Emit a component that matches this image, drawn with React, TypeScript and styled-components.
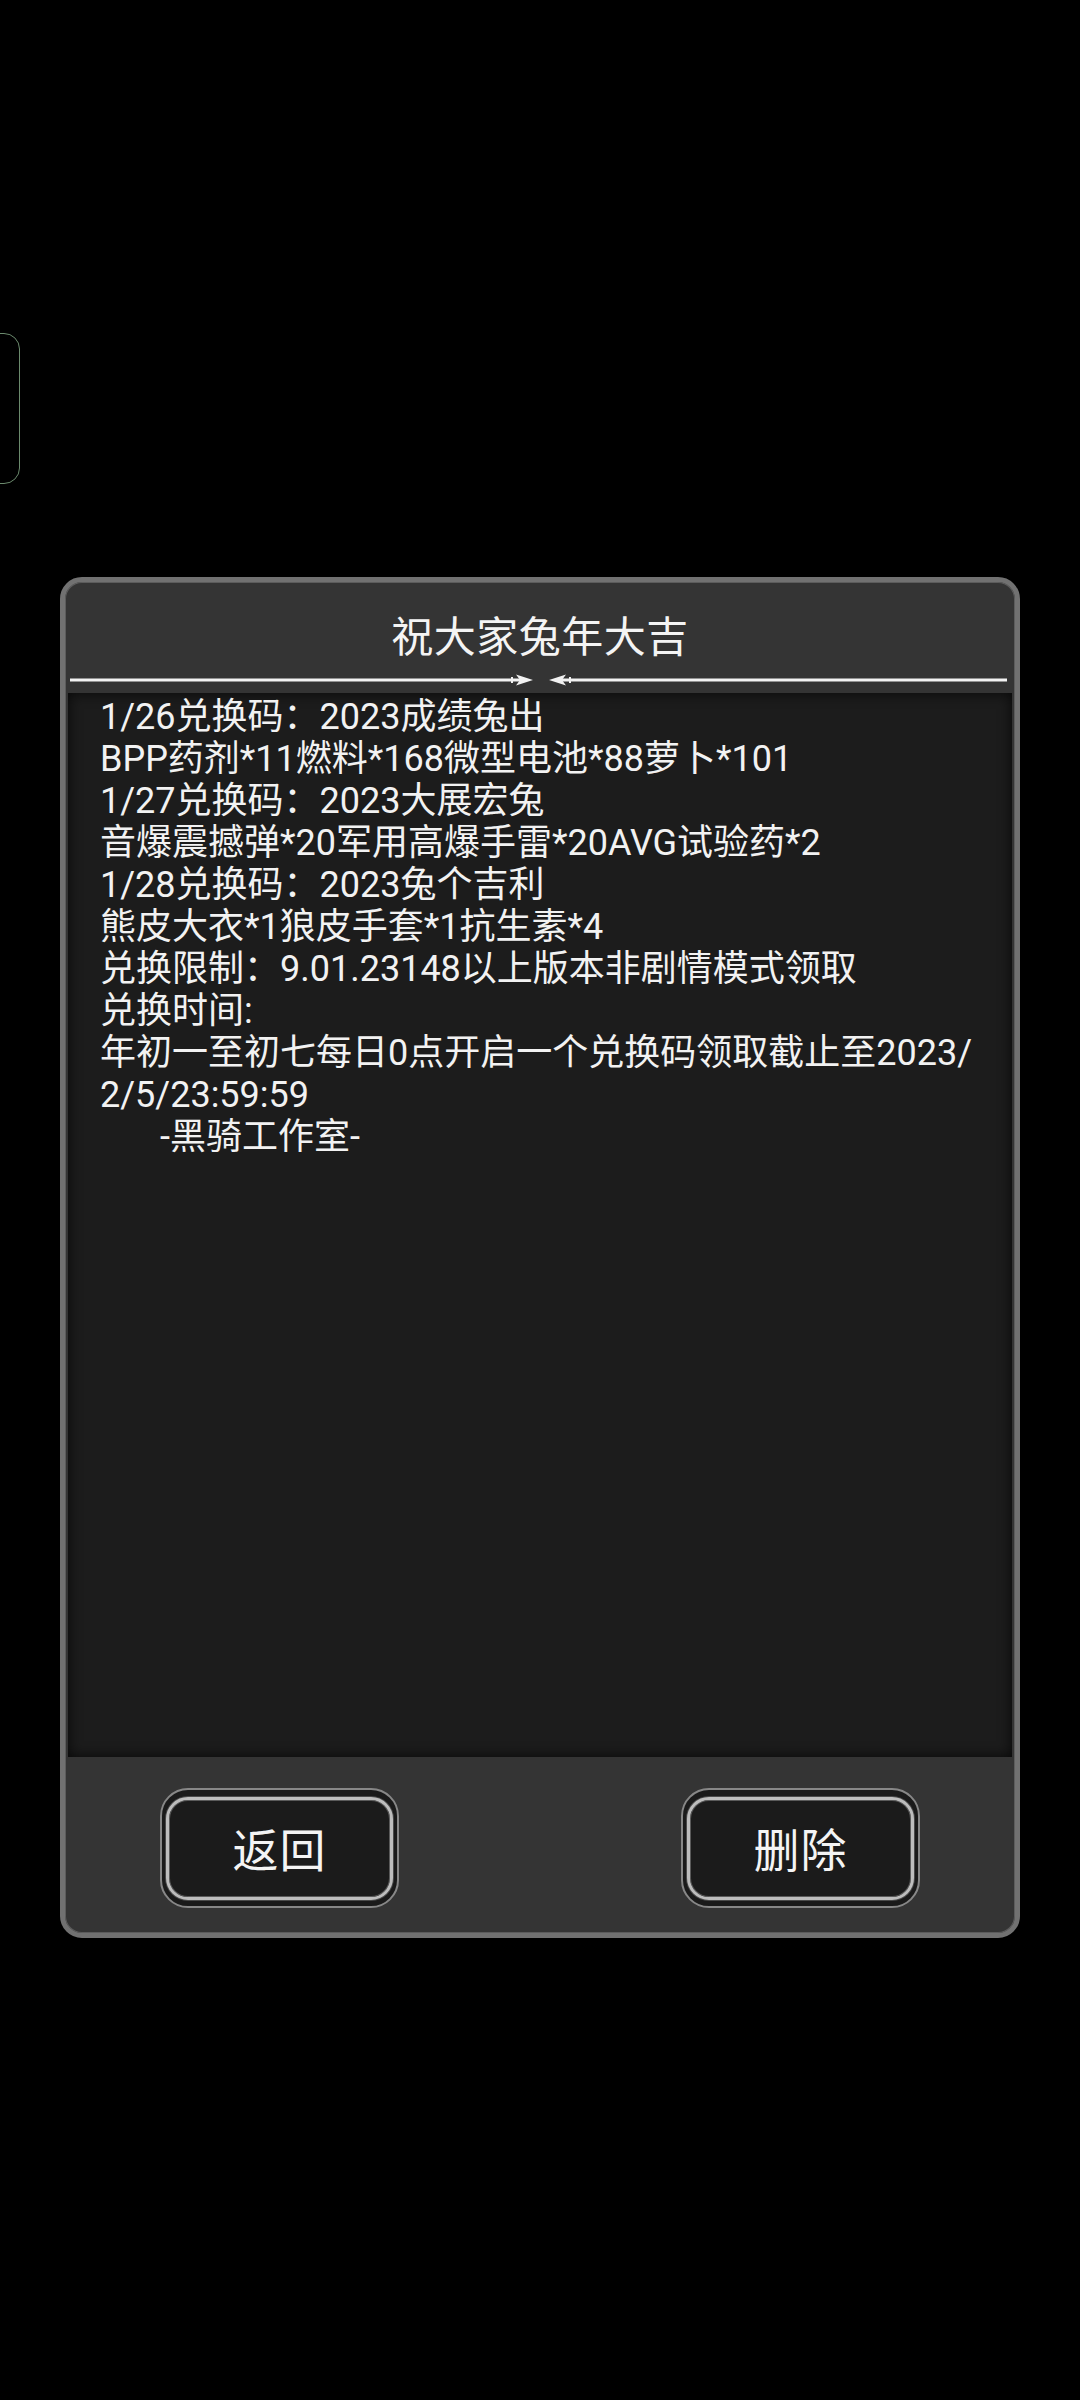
import styled, { createGlobalStyle } from 'styled-components';

const GlobalStyle = createGlobalStyle`
  html,
  body {
    margin: 0;
    padding: 0;
    background: #000;
  }

  body {
    font-family: Roboto, 'Noto Sans CJK SC', sans-serif;
    color: #f2f2f2;
  }
`;

const Page = styled.div`
  position: relative;
  width: 1080px;
  height: 2400px;
  padding-top: 577px;
  box-sizing: border-box;
  overflow: hidden;
  background: #000;
`;

// the thin edge handle hanging off the left side of the screen
const EdgeHandle = styled.div`
  position: absolute;
  left: -20px;
  top: 333px;
  width: 38px;
  height: 149px;
  border: 1.5px solid #6b8a6d;
  border-radius: 16px;
`;

const Dialog = styled.div`
  width: 960px;
  height: 1361px;
  margin: 0 auto;
  box-sizing: border-box;
  border: 5px solid #717171;
  border-radius: 22px;
  background: #343434;
  box-shadow: inset 0 0 0 1px #5c5c5c;
  display: flex;
  flex-direction: column;
  padding: 0 3px;
`;

const Header = styled.div`
  display: flex;
  flex-direction: column;
  align-items: center;
  padding-top: 35px;
`;

const Title = styled.div`
  font-size: 42px;
  line-height: 42px;
  color: #f4f4f4;
  letter-spacing: 0.5px;
`;

const Divider = styled.svg`
  display: block;
  align-self: stretch;
  margin: 14px 5px 0 2px;
  height: 14px;
`;

const Content = styled.div`
  flex: 1;
  margin-top: 6px;
  background: #1c1c1c;
  box-shadow: inset 0 0 14px rgba(0, 0, 0, 0.75);
  padding: 3px 0 0 32px;
`;

const Line = styled.div<{ $indent?: number }>`
  font-size: 36px;
  line-height: 42px;
  white-space: nowrap;
  padding-left: ${(p) => p.$indent ?? 0}px;
`;

const Footer = styled.div`
  display: flex;
  justify-content: space-between;
  padding: 31px 92px 25px;
`;

const ButtonRing = styled.div`
  width: 239px;
  height: 120px;
  box-sizing: border-box;
  border: 2px solid #878787;
  border-radius: 28px;
  background: #1a1a1a;
  padding: 7px 4px 6px;
  display: flex;
`;

const ButtonFace = styled.button`
  flex: 1;
  border: 3px solid #bdbdbd;
  border-radius: 22px;
  background: #1b1b1b;
  box-shadow: inset 0 0 0 1px #5a5a5a, 0 0 0 1px #4a4a4a;
  color: #f4f4f4;
  font-family: Roboto, 'Noto Sans CJK SC', sans-serif;
  font-size: 46px;
  letter-spacing: 1px;
  padding: 0 0 4px;
  display: flex;
  align-items: center;
  justify-content: center;
`;

const lines: { text: string; indent?: number }[] = [
  { text: '1/26兑换码：2023成绩兔出' },
  { text: 'BPP药剂*11燃料*168微型电池*88萝卜*101' },
  { text: '1/27兑换码：2023大展宏兔' },
  { text: '音爆震撼弹*20军用高爆手雷*20AVG试验药*2' },
  { text: '1/28兑换码：2023兔个吉利' },
  { text: '熊皮大衣*1狼皮手套*1抗生素*4' },
  { text: '兑换限制：9.01.23148以上版本非剧情模式领取' },
  { text: '兑换时间:' },
  { text: '年初一至初七每日0点开启一个兑换码领取截止至2023/' },
  { text: '2/5/23:59:59' },
  { text: '-黑骑工作室-', indent: 60 },
];

function ArrowDivider() {
  // two lines meeting in the middle, each ending in an arrow head
  return (
    <Divider viewBox="0 0 937 14" preserveAspectRatio="none">
      <rect x="0" y="5.5" width="450" height="3" fill="#f2f2f2" />
      <rect x="441" y="4" width="2" height="6" fill="#f2f2f2" />
      <polygon points="446,1.5 463,7 446,12.5 450,7" fill="#f2f2f2" />
      <rect x="492" y="5.5" width="445" height="3" fill="#f2f2f2" />
      <rect x="499" y="4" width="2" height="6" fill="#f2f2f2" />
      <polygon points="496,1.5 479,7 496,12.5 492,7" fill="#f2f2f2" />
    </Divider>
  );
}

export default function App() {
  return (
    <>
      <GlobalStyle />
      <Page>
        <EdgeHandle />
        <Dialog>
          <Header>
            <Title>祝大家兔年大吉</Title>
            <ArrowDivider />
          </Header>
          <Content>
            {lines.map((l, i) => (
              <Line key={i} $indent={l.indent}>
                {l.text}
              </Line>
            ))}
          </Content>
          <Footer>
            <ButtonRing>
              <ButtonFace>返回</ButtonFace>
            </ButtonRing>
            <ButtonRing>
              <ButtonFace>删除</ButtonFace>
            </ButtonRing>
          </Footer>
        </Dialog>
      </Page>
    </>
  );
}
